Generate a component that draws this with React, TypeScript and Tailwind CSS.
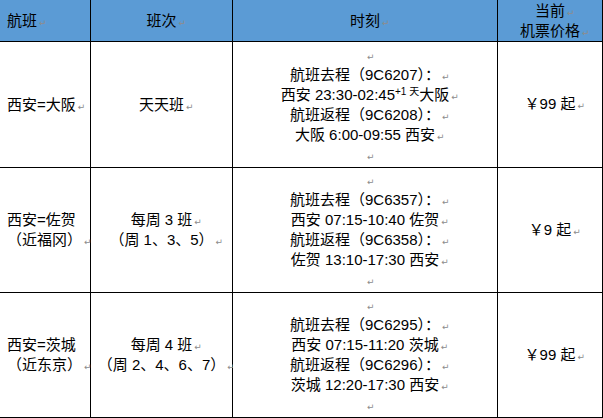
import React from "react";

// Word-style paragraph mark, drawn after the text without shifting centring
const Mark = () => (
  <span className="inline-block w-0 whitespace-nowrap align-baseline font-['DejaVu_Sans',sans-serif] text-[9px] leading-none text-[#8c8c8c]">
    <span className="ml-[2px]">↵</span>
  </span>
);

const EmptyLine = () => (
  <div>
    <Mark />
  </div>
);

const headCell = "flex items-center border-r border-b border-black bg-[#5b9bd5] leading-[20px]";
const bodyCell = "flex items-center border-r border-b border-black bg-white";

type Row = {
  route: string[];
  freq: string[];
  times: React.ReactNode[];
  price: string;
};

const rows: Row[] = [
  {
    route: ["西安=大阪"],
    freq: ["天天班"],
    times: [
      "航班去程（9C6207）：",
      <>
        西安 23:30-02:45<sup className="text-[10px]">+1 天</sup>大阪
      </>,
      "航班返程（9C6208）：",
      "大阪 6:00-09:55 西安",
    ],
    price: "￥99 起",
  },
  {
    route: ["西安=佐贺", "（近福冈）"],
    freq: ["每周 3 班", "（周 1、3、5）"],
    times: [
      "航班去程（9C6357）：",
      "西安 07:15-10:40 佐贺",
      "航班返程（9C6358）：",
      "佐贺 13:10-17:30 西安",
    ],
    price: "￥9 起",
  },
  {
    route: ["西安=茨城", "（近东京）"],
    freq: ["每周 4 班", "（周 2、4、6、7）"],
    times: [
      "航班去程（9C6295）：",
      "西安 07:15-11:20 茨城",
      "航班返程（9C6296）：",
      "茨城 12:20-17:30 西安",
    ],
    price: "￥99 起",
  },
];

export default function App() {
  return (
    <div className="h-[418px] w-[603px] overflow-hidden bg-white font-['Liberation_Sans','Noto_Sans_CJK_SC',sans-serif] text-[15px] text-black">
      <div className="grid grid-cols-[91px_142px_265px_105px] grid-rows-[42px_126px_125px_125px]">
        {/* Header */}
        <div className={`${headCell} pl-[7px]`}>
          <span>
            航班
            <Mark />
          </span>
        </div>
        <div className={`${headCell} justify-center`}>
          <span>
            班次
            <Mark />
          </span>
        </div>
        <div className={`${headCell} justify-center`}>
          <span>
            时刻
            <Mark />
          </span>
        </div>
        <div className={`${headCell} justify-center text-center`}>
          <div>
            <div>
              当前
              <Mark />
            </div>
            <div>
              机票价格
              <Mark />
            </div>
          </div>
        </div>

        {/* Body */}
        {rows.map((r, i) => (
          <React.Fragment key={i}>
            <div className={`${bodyCell} pl-[7px] leading-[20px]`}>
              <div>
                {r.route.map((t, j) => (
                  <div key={j}>
                    {t}
                    {j === r.route.length - 1 && <Mark />}
                  </div>
                ))}
              </div>
            </div>
            <div className={`${bodyCell} justify-center text-center leading-[20px]`}>
              <div>
                {r.freq.map((t, j) => (
                  <div key={j}>
                    {t}
                    <Mark />
                  </div>
                ))}
              </div>
            </div>
            <div className={`${bodyCell} justify-center text-center leading-[20px]`}>
              <div>
                <EmptyLine />
                {r.times.map((t, j) => (
                  <div key={j} className="whitespace-nowrap">
                    {t}
                    <Mark />
                  </div>
                ))}
                <EmptyLine />
              </div>
            </div>
            <div className={`${bodyCell} justify-center`}>
              <span>
                {r.price}
                <Mark />
              </span>
            </div>
          </React.Fragment>
        ))}
      </div>
    </div>
  );
}
